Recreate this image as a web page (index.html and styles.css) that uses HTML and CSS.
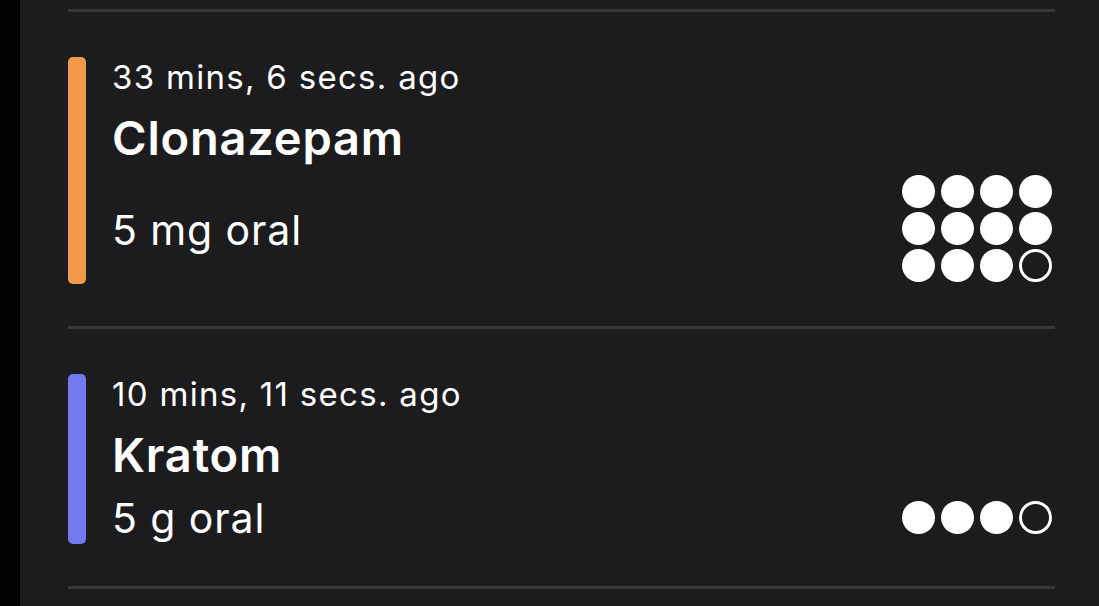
FILE: index.html
```html
<!DOCTYPE html>
<html lang="en">
<head>
  <meta charset="UTF-8">
  <meta name="viewport" content="width=device-width, initial-scale=1.0">
  <title>Ingestions</title>
  <link rel="stylesheet" href="styles.css">
</head>
<body>
  <div class="screen">
    <ul class="ingestions">
      <li class="ingestion">
        <div class="bar orange"></div>
        <div class="details">
          <div class="time">33 mins, 6 secs. ago</div>
          <div class="name">Clonazepam</div>
          <div class="dose-row">
            <div class="dose">5 mg oral</div>
            <div class="dots">
              <span class="dot"></span><span class="dot"></span><span class="dot"></span><span class="dot"></span>
              <span class="dot"></span><span class="dot"></span><span class="dot"></span><span class="dot"></span>
              <span class="dot"></span><span class="dot"></span><span class="dot"></span><span class="dot empty"></span>
            </div>
          </div>
        </div>
      </li>
      <li class="ingestion">
        <div class="bar purple"></div>
        <div class="details">
          <div class="time">10 mins, 11 secs. ago</div>
          <div class="name">Kratom</div>
          <div class="dose-row">
            <div class="dose">5 g oral</div>
            <div class="dots">
              <span class="dot"></span><span class="dot"></span><span class="dot"></span><span class="dot empty"></span>
            </div>
          </div>
        </div>
      </li>
    </ul>
  </div>
</body>
</html>
```

FILE: styles.css
```css
html, body {
  margin: 0;
  padding: 0;
  background: #000;
}
body {
  font-family: Inter, "Noto Sans", sans-serif;
  color: #fff;
}
.screen {
  margin-left: 20px;
  min-height: 606px;
  background: #1c1c1e;
  padding: 9px 44px 0 48px;
}
.ingestions {
  list-style: none;
  margin: 0;
  padding: 0;
  border-top: 3px solid #38383a;
}
.ingestion {
  display: flex;
  padding: 45px 0 42px;
  border-bottom: 3px solid #38383a;
}
.bar {
  width: 18px;
  border-radius: 5px;
  margin-right: 26px;
  flex-shrink: 0;
}
.orange {
  background: #f09a4a;
}
.purple {
  background: #7479f2;
}
.details {
  flex: 1;
  display: flex;
  flex-direction: column;
}
.time {
  font-size: 33px;
  line-height: 40px;
  letter-spacing: 1.3px;
  margin-bottom: 12px;
}
.name {
  font-size: 47px;
  font-weight: 600;
  line-height: 57px;
  letter-spacing: 0.8px;
  margin-bottom: 9px;
}
.dose-row {
  display: flex;
  align-items: center;
  justify-content: space-between;
}
.dose {
  font-size: 41px;
  line-height: 52px;
  letter-spacing: 0.9px;
}
.dots {
  display: grid;
  grid-template-columns: repeat(4, 33px);
  column-gap: 6px;
  row-gap: 4px;
  margin-right: 3px;
  padding-bottom: 2px;
}
.dot {
  width: 33px;
  height: 33px;
  border-radius: 50%;
  background: #fff;
  box-sizing: border-box;
}
.dot.empty {
  background: none;
  border: 3px solid #fff;
}
```
